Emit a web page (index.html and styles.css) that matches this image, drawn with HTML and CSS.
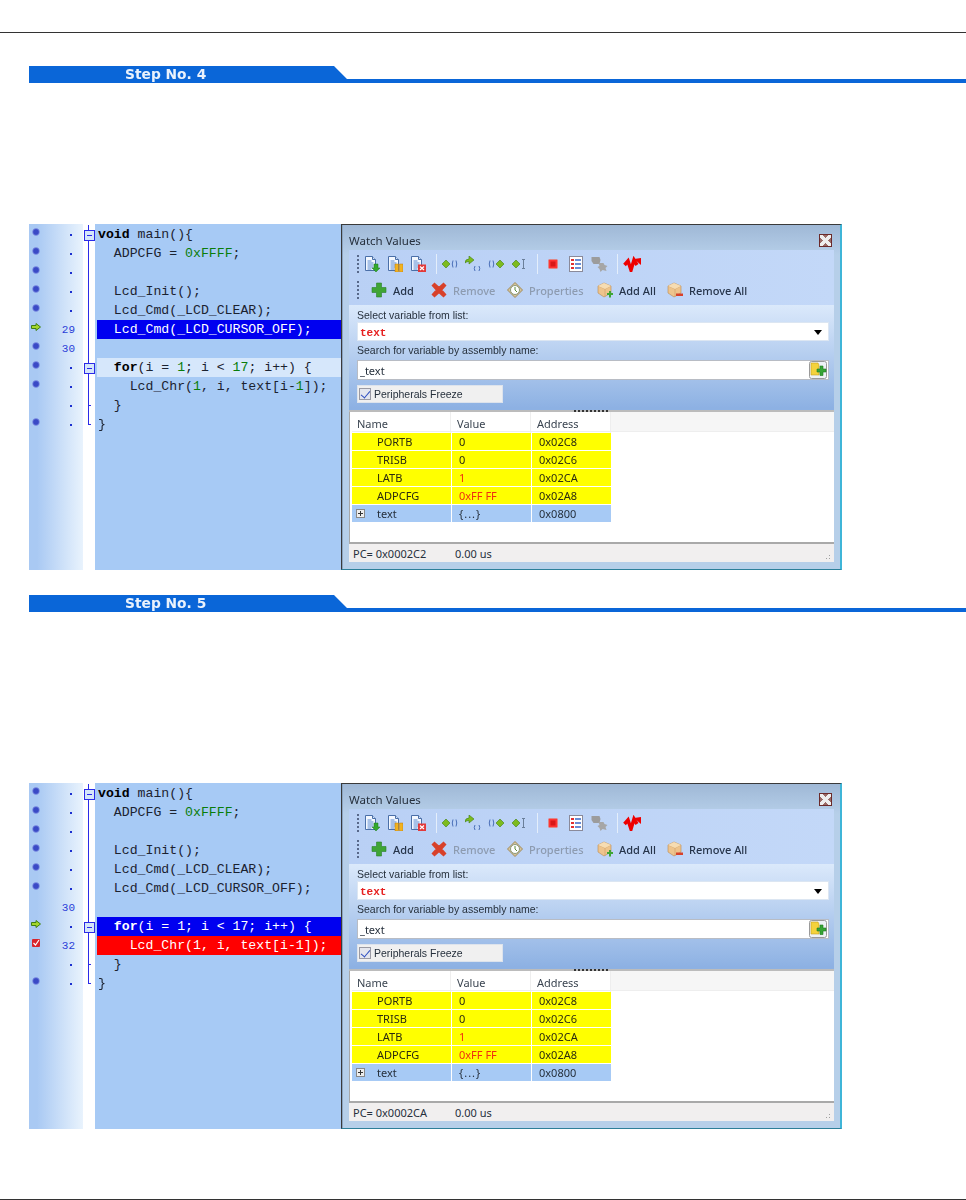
FILE: index.html
```html
<!DOCTYPE html>
<html lang="en">
<head>
<meta charset="utf-8">
<title>Watch Values steps</title>
<link rel="stylesheet" href="styles.css">
</head>
<body>
<svg class="defs" xmlns="http://www.w3.org/2000/svg">
  <symbol id="doc" viewBox="0 0 16 16"><path d="M1.500 .5h7l3 3v11h-10z" fill="#f4f8ff" stroke="#4a6fa8"/><path d="M8.500 .5v3h3" fill="#cfe0f8" stroke="#4a6fa8"/><path d="M3.500 5h4M3.500 7h6M3.500 9h6M3.500 11h6M3.500 13h4" stroke="#5b8ad0"/></symbol>
  <symbol id="i-docin" viewBox="0 0 16 16"><use href="#doc"/><path d="M10 8h4v4h2l-4 4-4-4h2z" fill="#35a82c" stroke="#1c7a1c" stroke-width=".5"/></symbol>
  <symbol id="i-docpause" viewBox="0 0 16 16"><use href="#doc"/><path d="M8 8h3.500v8H8zM12.500 8H16v8h-3.500z" fill="#f2b21e" stroke="#b87a10" stroke-width=".5"/></symbol>
  <symbol id="i-docx" viewBox="0 0 16 16"><use href="#doc"/><rect x="8" y="8.500" width="8" height="7.500" fill="#e23a3a"/><path d="M10 10.500l4 3.500m0-3.500l-4 3.500" stroke="#fff" stroke-width="1.200"/></symbol>
  <symbol id="dia" viewBox="0 0 8 8"><path d="M0 4l4-4 4 4-4 4z" fill="#7dbb1e" stroke="#3f7f14" stroke-width=".6"/></symbol>
  <symbol id="i-into" viewBox="0 0 16 16"><use href="#dia" x="0" y="4" width="8" height="8"/><path d="M11 4.500Q9.500 8 11 11.500M14 4.500Q15.500 8 14 11.500" fill="none" stroke="#4a6fb8"/></symbol>
  <symbol id="i-over" viewBox="0 0 16 16"><path d="M0 7Q0 3 4 3V0l5 4-5 4V5.500Q1.500 5.500 0 7z" fill="#7dbb1e" stroke="#3f7f14" stroke-width=".6"/><path d="M10 10Q8.500 12.500 10 15M14 10Q15.500 12.500 14 15" fill="none" stroke="#4a6fb8"/></symbol>
  <symbol id="i-out" viewBox="0 0 16 16"><path d="M2 4.500Q.5 8 2 11.500M5 4.500Q6.500 8 5 11.500" fill="none" stroke="#4a6fb8"/><use href="#dia" x="8" y="4" width="8" height="8"/></symbol>
  <symbol id="i-cursor" viewBox="0 0 16 16"><use href="#dia" x="1" y="4" width="8" height="8"/><path d="M11 3.500h3M11 12.500h3M12.500 3.500v9" fill="none" stroke="#6a7f9a"/></symbol>
  <symbol id="i-stop" viewBox="0 0 16 16"><rect x="3.500" y="3.500" width="9" height="9" rx="1" fill="#f33" stroke="#d88"/><rect x="5.500" y="5.500" width="5" height="5" fill="#d81818"/></symbol>
  <symbol id="i-list" viewBox="0 0 16 16"><rect x="1.500" y=".5" width="13" height="15" fill="#fff" stroke="#8a8a9a"/><path d="M3 3h3v2H3zM3 7h3v2H3zM3 11h3v2H3z" fill="#e03030"/><path d="M7 4h6M7 8h6M7 12h6" stroke="#3a6ac8" stroke-width="1.500"/></symbol>
  <symbol id="i-grey" viewBox="0 0 17 16"><path d="M0 1h8l1 3-1 4H2L0 5z" fill="#9c9c9c"/><path d="M7 7h5l1 2 3 1-2 2 1 3-4-1-2 2-1-3-2-2 2-1z" fill="#a6a6a6"/></symbol>
  <symbol id="i-zig" viewBox="0 0 18 16"><path d="M1.500 9l3.500-4 3 9 3-10 3 5" fill="none" stroke="#e00" stroke-width="3.500"/><path d="M11 3l7-1v7z" fill="#e00"/></symbol>
  <symbol id="i-add" viewBox="0 0 16 16"><path d="M5.500 1h5v4.500H15v5h-4.500V15h-5v-4.500H1v-5h4.500z" fill="#3fa535" stroke="#2a7f2a" stroke-width=".6"/></symbol>
  <symbol id="i-del" viewBox="0 0 16 16"><path d="M1.500 3.500l2-2L8 5.500l4.500-4 2 2L10.500 8l4 4.500-2 2L8 10.500l-4.500 4-2-2L5.500 8z" fill="#d8412a" stroke="#d8412a" stroke-width="1.500"/></symbol>
  <symbol id="i-prop" viewBox="0 0 16 16"><path d="M8 .5L15.500 8 8 15.500.5 8z" fill="#d6c49a" stroke="#a08a5a"/><circle cx="8" cy="8" r="4.500" fill="#fff" stroke="#8a9a7a"/><path d="M8 5v3l2 2" fill="none" stroke="#5a8a3a"/></symbol>
  <symbol id="box" viewBox="0 0 16 16"><path d="M1 4l6-3 7 3v7l-7 4-6-4z" fill="#eec48c" stroke="#b98a50" stroke-width=".6"/><path d="M1 4l7 3 6-3M8 7v8" fill="none" stroke="#cfa06a" stroke-width=".6"/><path d="M1 4l6-3 7 3-6 3z" fill="#f6dcb2"/></symbol>
  <symbol id="i-boxadd" viewBox="0 0 16 16"><use href="#box"/><path d="M10 11h2V9h2v2h2v2h-2v2.500h-2V13h-2z" fill="#3fa535"/></symbol>
  <symbol id="i-boxdel" viewBox="0 0 16 16"><use href="#box"/><path d="M9 11.500h7v2.500H9z" fill="#d8412a"/></symbol>
  <symbol id="i-search" viewBox="0 0 18 18"><rect x=".5" y=".5" width="17" height="17" rx="2" fill="#eef2f6" stroke="#9a9a9a"/><path d="M2 2h7l1 2v10H2z" fill="#f4d23c" stroke="#c6a020" stroke-width=".6"/><path d="M8 8h3V5h3v3h3v3h-3v3.500h-3V11H8z" fill="#36a535" stroke="#1f7a1f" stroke-width=".6"/></symbol>
  <symbol id="m-bp" viewBox="0 0 8 8"><circle cx="4" cy="4" r="3.400" fill="#3a4ac6" stroke="#8c9ce8" stroke-width=".7"/></symbol>
  <symbol id="m-arrow" viewBox="0 0 10 8"><path d="M.5 2.500h4.500V.5L9.500 4 5 7.500v-2H.5z" fill="#a4d62c" stroke="#3f7f14"/></symbol>
  <symbol id="m-check" viewBox="0 0 8 8"><rect width="8" height="8" rx="1" fill="#d8242c"/><path d="M1.500 4l2 2L7 1" fill="none" stroke="#fff" stroke-width="1.200"/></symbol>
</svg>

<hr class="rule rule-top">

<h2 class="step step-first">Step No. 4</h2>

<section class="shot shot-first">
  <div class="editor">
    <div class="row"><span class="mark"><svg class="m"><use href="#m-bp"/></svg></span><span class="num"><i class="tick"></i></span><span class="fold fold-box"></span><pre class="code"><b>void</b> main(){</pre></div>
    <div class="row"><span class="mark"><svg class="m"><use href="#m-bp"/></svg></span><span class="num"><i class="tick"></i></span><span class="fold fold-line"></span><pre class="code">  ADPCFG = <em>0xFFFF</em>;</pre></div>
    <div class="row"><span class="mark"><svg class="m"><use href="#m-bp"/></svg></span><span class="num"><i class="tick"></i></span><span class="fold fold-line"></span><pre class="code"> </pre></div>
    <div class="row"><span class="mark"><svg class="m"><use href="#m-bp"/></svg></span><span class="num"><i class="tick"></i></span><span class="fold fold-line"></span><pre class="code">  Lcd_Init();</pre></div>
    <div class="row"><span class="mark"><svg class="m"><use href="#m-bp"/></svg></span><span class="num"><i class="tick"></i></span><span class="fold fold-line"></span><pre class="code">  Lcd_Cmd(_LCD_CLEAR);</pre></div>
    <div class="row"><span class="mark"><svg class="m-a"><use href="#m-arrow"/></svg></span><span class="num">29</span><span class="fold fold-line"></span><pre class="code code-blue">  Lcd_Cmd(_LCD_CURSOR_OFF);</pre></div>
    <div class="row"><span class="mark"><svg class="m"><use href="#m-bp"/></svg></span><span class="num">30</span><span class="fold fold-line"></span><pre class="code"> </pre></div>
    <div class="row"><span class="mark"><svg class="m"><use href="#m-bp"/></svg></span><span class="num"><i class="tick"></i></span><span class="fold fold-box"></span><pre class="code code-light">  <b>for</b>(i = <em>1</em>; i &lt; <em>17</em>; i++) {</pre></div>
    <div class="row"><span class="mark"><svg class="m"><use href="#m-bp"/></svg></span><span class="num"><i class="tick"></i></span><span class="fold fold-line"></span><pre class="code">    Lcd_Chr(<em>1</em>, i, text[i-<em>1</em>]);</pre></div>
    <div class="row"><span class="mark"></span><span class="num"><i class="tick"></i></span><span class="fold fold-tee"></span><pre class="code">  }</pre></div>
    <div class="row"><span class="mark"><svg class="m"><use href="#m-bp"/></svg></span><span class="num"><i class="tick"></i></span><span class="fold fold-end"></span><pre class="code">}</pre></div>
  </div>
  <div class="panel">
    <div class="title"><span>Watch Values</span><span class="close"></span></div>
    <div class="tb tb-icons">
      <span class="grip"></span>
      <svg class="ic"><use href="#i-docin"/></svg><svg class="ic"><use href="#i-docpause"/></svg><svg class="ic"><use href="#i-docx"/></svg>
      <span class="sep"></span>
      <svg class="ic"><use href="#i-into"/></svg><svg class="ic"><use href="#i-over"/></svg><svg class="ic"><use href="#i-out"/></svg><svg class="ic"><use href="#i-cursor"/></svg>
      <span class="sep sep-wide"></span>
      <svg class="ic"><use href="#i-stop"/></svg><svg class="ic"><use href="#i-list"/></svg><svg class="ic ic-wide"><use href="#i-grey"/></svg>
      <span class="sep sep-tight"></span>
      <svg class="ic ic-wide"><use href="#i-zig"/></svg>
    </div>
    <div class="tb tb-text">
      <span class="grip grip-text"></span>
      <span class="tool t-add"><svg class="ic"><use href="#i-add"/></svg>Add</span>
      <span class="tool t-rem off"><svg class="ic"><use href="#i-del"/></svg>Remove</span>
      <span class="tool t-prop off"><svg class="ic"><use href="#i-prop"/></svg>Properties</span>
      <span class="tool t-all"><svg class="ic"><use href="#i-boxadd"/></svg>Add All</span>
      <span class="tool"><svg class="ic"><use href="#i-boxdel"/></svg>Remove All</span>
    </div>
    <div class="form">
      <div class="lab">Select variable from list:</div>
      <div class="combo"><span class="var">text</span><span class="caret"></span></div>
      <div class="lab">Search for variable by assembly name:</div>
      <div class="input"><span>_text</span><svg class="find"><use href="#i-search"/></svg></div>
      <div class="freeze"><span class="chk"></span>Peripherals Freeze</div>
    </div>
    <div class="split"><span class="split-grip"></span></div>
    <div class="list">
      <div class="lrow lhead"><span>Name</span><span>Value</span><span>Address</span></div>
      <div class="lrow hot"><span class="nm">PORTB</span><span>0</span><span>0x02C8</span></div>
      <div class="lrow hot"><span class="nm">TRISB</span><span>0</span><span>0x02C6</span></div>
      <div class="lrow hot"><span class="nm">LATB</span><span class="chg">1</span><span>0x02CA</span></div>
      <div class="lrow hot"><span class="nm">ADPCFG</span><span class="chg">0xFF FF</span><span>0x02A8</span></div>
      <div class="lrow cold"><span class="nm nm-tree"><i class="exp"></i>text</span><span class="brace">{...}</span><span>0x0800</span></div>
    </div>
    <div class="status"><span class="pc">PC= 0x0002C2</span><span class="time">0.00 us</span><span class="resize"></span></div>
  </div>
</section>

<h2 class="step step-second">Step No. 5</h2>

<section class="shot shot-second">
  <div class="editor">
    <div class="row"><span class="mark"><svg class="m"><use href="#m-bp"/></svg></span><span class="num"><i class="tick"></i></span><span class="fold fold-box"></span><pre class="code"><b>void</b> main(){</pre></div>
    <div class="row"><span class="mark"><svg class="m"><use href="#m-bp"/></svg></span><span class="num"><i class="tick"></i></span><span class="fold fold-line"></span><pre class="code">  ADPCFG = <em>0xFFFF</em>;</pre></div>
    <div class="row"><span class="mark"><svg class="m"><use href="#m-bp"/></svg></span><span class="num"><i class="tick"></i></span><span class="fold fold-line"></span><pre class="code"> </pre></div>
    <div class="row"><span class="mark"><svg class="m"><use href="#m-bp"/></svg></span><span class="num"><i class="tick"></i></span><span class="fold fold-line"></span><pre class="code">  Lcd_Init();</pre></div>
    <div class="row"><span class="mark"><svg class="m"><use href="#m-bp"/></svg></span><span class="num"><i class="tick"></i></span><span class="fold fold-line"></span><pre class="code">  Lcd_Cmd(_LCD_CLEAR);</pre></div>
    <div class="row"><span class="mark"><svg class="m"><use href="#m-bp"/></svg></span><span class="num"><i class="tick"></i></span><span class="fold fold-line"></span><pre class="code">  Lcd_Cmd(_LCD_CURSOR_OFF);</pre></div>
    <div class="row"><span class="mark"></span><span class="num">30</span><span class="fold fold-line"></span><pre class="code"> </pre></div>
    <div class="row"><span class="mark"><svg class="m-a"><use href="#m-arrow"/></svg></span><span class="num"><i class="tick"></i></span><span class="fold fold-box"></span><pre class="code code-blue">  <b>for</b>(i = 1; i &lt; 17; i++) {</pre></div>
    <div class="row"><span class="mark"><svg class="m"><use href="#m-check"/></svg></span><span class="num">32</span><span class="fold fold-line"></span><pre class="code code-red">    Lcd_Chr(1, i, text[i-1]);</pre></div>
    <div class="row"><span class="mark"></span><span class="num"><i class="tick"></i></span><span class="fold fold-tee"></span><pre class="code">  }</pre></div>
    <div class="row"><span class="mark"><svg class="m"><use href="#m-bp"/></svg></span><span class="num"><i class="tick"></i></span><span class="fold fold-end"></span><pre class="code">}</pre></div>
  </div>
  <div class="panel">
    <div class="title"><span>Watch Values</span><span class="close"></span></div>
    <div class="tb tb-icons">
      <span class="grip"></span>
      <svg class="ic"><use href="#i-docin"/></svg><svg class="ic"><use href="#i-docpause"/></svg><svg class="ic"><use href="#i-docx"/></svg>
      <span class="sep"></span>
      <svg class="ic"><use href="#i-into"/></svg><svg class="ic"><use href="#i-over"/></svg><svg class="ic"><use href="#i-out"/></svg><svg class="ic"><use href="#i-cursor"/></svg>
      <span class="sep sep-wide"></span>
      <svg class="ic"><use href="#i-stop"/></svg><svg class="ic"><use href="#i-list"/></svg><svg class="ic ic-wide"><use href="#i-grey"/></svg>
      <span class="sep sep-tight"></span>
      <svg class="ic ic-wide"><use href="#i-zig"/></svg>
    </div>
    <div class="tb tb-text">
      <span class="grip grip-text"></span>
      <span class="tool t-add"><svg class="ic"><use href="#i-add"/></svg>Add</span>
      <span class="tool t-rem off"><svg class="ic"><use href="#i-del"/></svg>Remove</span>
      <span class="tool t-prop off"><svg class="ic"><use href="#i-prop"/></svg>Properties</span>
      <span class="tool t-all"><svg class="ic"><use href="#i-boxadd"/></svg>Add All</span>
      <span class="tool"><svg class="ic"><use href="#i-boxdel"/></svg>Remove All</span>
    </div>
    <div class="form">
      <div class="lab">Select variable from list:</div>
      <div class="combo"><span class="var">text</span><span class="caret"></span></div>
      <div class="lab">Search for variable by assembly name:</div>
      <div class="input"><span>_text</span><svg class="find"><use href="#i-search"/></svg></div>
      <div class="freeze"><span class="chk"></span>Peripherals Freeze</div>
    </div>
    <div class="split"><span class="split-grip"></span></div>
    <div class="list">
      <div class="lrow lhead"><span>Name</span><span>Value</span><span>Address</span></div>
      <div class="lrow hot"><span class="nm">PORTB</span><span>0</span><span>0x02C8</span></div>
      <div class="lrow hot"><span class="nm">TRISB</span><span>0</span><span>0x02C6</span></div>
      <div class="lrow hot"><span class="nm">LATB</span><span class="chg">1</span><span>0x02CA</span></div>
      <div class="lrow hot"><span class="nm">ADPCFG</span><span class="chg">0xFF FF</span><span>0x02A8</span></div>
      <div class="lrow cold"><span class="nm nm-tree"><i class="exp"></i>text</span><span class="brace">{...}</span><span>0x0800</span></div>
    </div>
    <div class="status"><span class="pc">PC= 0x0002CA</span><span class="time">0.00 us</span><span class="resize"></span></div>
  </div>
</section>

<hr class="rule rule-bottom">
</body>
</html>
```
FILE: styles.css
```css
* { box-sizing: border-box; }
html, body { margin: 0; padding: 0; background: #fff; }
body { width: 966px; height: 1200px; overflow: hidden; font-family: "Noto Sans", sans-serif; font-size: 11px; color: #26303c; }
.defs { display: none; }

.rule { border: 0; height: 1px; background: #333; margin: 0; }
.rule-top { margin-top: 32px; }
.rule-bottom { margin-top: 70px; }

.step {
  margin: 0 0 0 29px; height: 17px; padding-left: 96px;
  font: bold 13.800px/17px "DejaVu Sans", sans-serif; color: #eaf2fc;
  background: #0a66d8;
  clip-path: polygon(0 0, 305px 0, 318px 13px, 100% 13px, 100% 100%, 0 100%);
  filter: blur(.3px);
}
.step-first { margin-top: 33px; }
.step-second { margin-top: 25px; }

.shot { display: flex; margin-left: 29px; width: 813px; height: 346px; filter: blur(.3px); }
.shot-first { margin-top: 141px; }
.shot-second { margin-top: 171px; }

.editor {
  width: 312px; padding-top: 1px;
  background: linear-gradient(90deg, #a9c9f3 0, #a9c9f3 8px, #e9f3fd 54px, #fff 54px, #fff 66px, #a7caf5 66px);
}
.row { display: flex; height: 19px; }
.mark { width: 13px; display: flex; justify-content: center; padding-top: 3px; }
.m { width: 8px; height: 8px; }
.m-a { width: 10px; height: 8px; flex: none; }
.num { width: 34px; text-align: right; padding-right: 1px; font: 11px/20px "Liberation Mono", monospace; color: #2a40d8; }
.tick { display: inline-block; width: 2px; height: 2px; background: #1b2fd0; margin: 0 3px 2px 0; }
.fold { position: relative; width: 21px; flex: none; }
.fold::after { content: ""; position: absolute; left: 12px; top: 0; bottom: 0; width: 1px; background: #2a2ae8; }
.fold-box::before { content: ""; position: absolute; z-index: 1; left: 8px; top: 5px; width: 9px; height: 9px; background: linear-gradient(#2a2ae8, #2a2ae8) center/5px 1px no-repeat #d5e6fa; border: 1px solid #2a2ae8; }
.fold-end::after { bottom: 9px; }
.fold-end::before, .fold-tee::before { content: ""; position: absolute; left: 13px; top: 9px; width: 2px; height: 1px; background: #2a2ae8; }
.code { flex: 1; margin: 0; padding-left: 1px; font: 13.200px/19px "Liberation Mono", monospace; color: #1b2230; white-space: pre; }
.code b { font-weight: bold; color: #000; }
.code em { font-style: normal; color: #0a7d0a; }
.code-blue { background: #0000f0; color: #fff; }
.code-blue b { color: #fff; }
.code-red { background: #ff0000; color: #fff; }
.code-light { background: #d6e7fb; }

.panel {
  width: 501px; display: flex; flex-direction: column;
  padding: 0 6px 6px 7px;
  border: 1px solid #3a3a3a; border-right: 2px solid #3fb5d8; border-bottom-color: #2c7f99;
  box-shadow: inset 1px 0 0 #8aa4c0;
  background: linear-gradient(#9fb8d6, #b6cfe9 30px);
}
.title { height: 25px; display: flex; justify-content: space-between; align-items: center; padding-top: 6px; padding-right: 2px; font-size: 11.500px; }
.close { width: 13px; height: 13px; border: 1px solid #6b2a2a; background: linear-gradient(45deg, transparent 40%, #eee 40% 60%, transparent 60%), linear-gradient(-45deg, transparent 40%, #eee 40% 60%, transparent 60%), #9a6a66; }
.tb { display: flex; align-items: center; background: linear-gradient(90deg, #b9d0f5, #c3d8f8); }
.tb-icons { height: 27px; gap: 7px; padding-left: 8px; }
.tb-text { height: 28px; padding: 0 0 2px 8px; font-weight: 500; color: #26344a; }
.grip { width: 2px; height: 18px; background: repeating-linear-gradient(#58688a 0 2px, transparent 2px 4px); margin-right: -2px; }
.grip-text { margin-right: 12px; }
.ic { width: 16px; height: 16px; flex: none; }
.ic-wide { width: 18px; }
.sep { width: 1px; height: 20px; background: #e4eefb; margin: 0 -2px 0 3px; }
.sep-wide { margin-right: 0; }
.sep-tight { margin-left: 1px; }
.tool { display: flex; align-items: center; gap: 6px; white-space: nowrap; }
.t-add { width: 60px; }
.t-rem { width: 76px; }
.t-prop { width: 90px; }
.t-all { width: 70px; }
.off { color: #8d9bb0; }

.form { height: 103px; padding: 0 5px 0 8px; background: linear-gradient(#dbe9fb, #8db1e3); }
.lab, .freeze { font-family: "Liberation Sans", sans-serif; font-size: 10.500px; }
.lab { height: 17px; line-height: 21px; white-space: nowrap; }
.lab + .combo { height: 19px; }
.combo { display: flex; justify-content: space-between; align-items: center; background: #fff; border: 1px solid #dce6f2; padding: 0 6px 0 2px; }
.combo + .lab { height: 19px; line-height: 19px; }
.var { font: bold 11px "Liberation Mono", monospace; color: #e62020; margin-top: 3px; }
.caret { width: 0; height: 0; border: 4px solid transparent; border-top: 5px solid #000; border-bottom: 0; margin-top: 2px; }
.input { height: 20px; display: flex; justify-content: space-between; align-items: center; background: #fff; border: 1px solid #b8bcc4; padding: 0 1px 0 2px; }
.find { width: 18px; height: 18px; }
.freeze { width: 146px; height: 18px; margin-top: 5px; display: flex; align-items: center; gap: 3px; background: #f0f0f0; border: 1px solid #dde3ec; padding-left: 1px; }
.chk { width: 12px; height: 12px; border: 1px solid #9a9aa4; background: #e4e6ee; position: relative; }
.chk::after { content: ""; position: absolute; left: 3px; top: 0; width: 4px; height: 8px; border: solid #2f4fc0; border-width: 0 1.500px 1.500px 0; transform: rotate(40deg); }

.split { height: 4px; background: linear-gradient(#8db1e3 50%, #bcbcbc 50%); display: flex; justify-content: center; }
.split-grip { margin-top: 2px; width: 35px; height: 2px; background: repeating-linear-gradient(90deg, #333 0 2px, transparent 2px 4px); }
.list { height: 130px; padding-left: 2px; background: #fff; border-left: 1px solid #a8a8a8; }
.lrow { display: grid; grid-template-columns: 99px 79px 79px; column-gap: 1px; height: 17px; margin-bottom: 1px; line-height: 17px; }
.lrow > span { padding-left: 7px; white-space: nowrap; }
.lhead { height: 20px; margin-bottom: 1px; line-height: 23px; color: #3a4450; background: linear-gradient(90deg, #fff, #fff 259px, #f6f6f6 259px); border-bottom: 1px solid #eee; }
.lhead > span { padding-left: 5px; border-right: 1px solid #eee; }
.hot > span { background: #ffff00; color: #2b2b10; }
.cold > span { background: #a7caf5; color: #26303c; }
.lrow > .nm { padding-left: 25px; }
.lrow > .nm-tree { padding-left: 4px; display: flex; align-items: center; gap: 12px; }
.lrow > .chg { color: #f03010; }
.lrow > .brace { letter-spacing: 1px; }
.exp { width: 9px; height: 9px; border: 1px solid #888; background: linear-gradient(#333, #333) center/5px 1px no-repeat, linear-gradient(#333, #333) center/1px 5px no-repeat, #eee; }
.status { height: 20px; display: flex; align-items: center; border-top: 2px solid #a9a9a9; background: #f1efef; position: relative; }
.pc { width: 106px; padding-left: 4px; white-space: nowrap; }
.resize { position: absolute; right: 2px; bottom: 1px; width: 10px; height: 10px; background: radial-gradient(#a0a0a0 40%, transparent 45%) 0 0/3px 3px; clip-path: polygon(100% 0, 100% 100%, 0 100%); }
```
